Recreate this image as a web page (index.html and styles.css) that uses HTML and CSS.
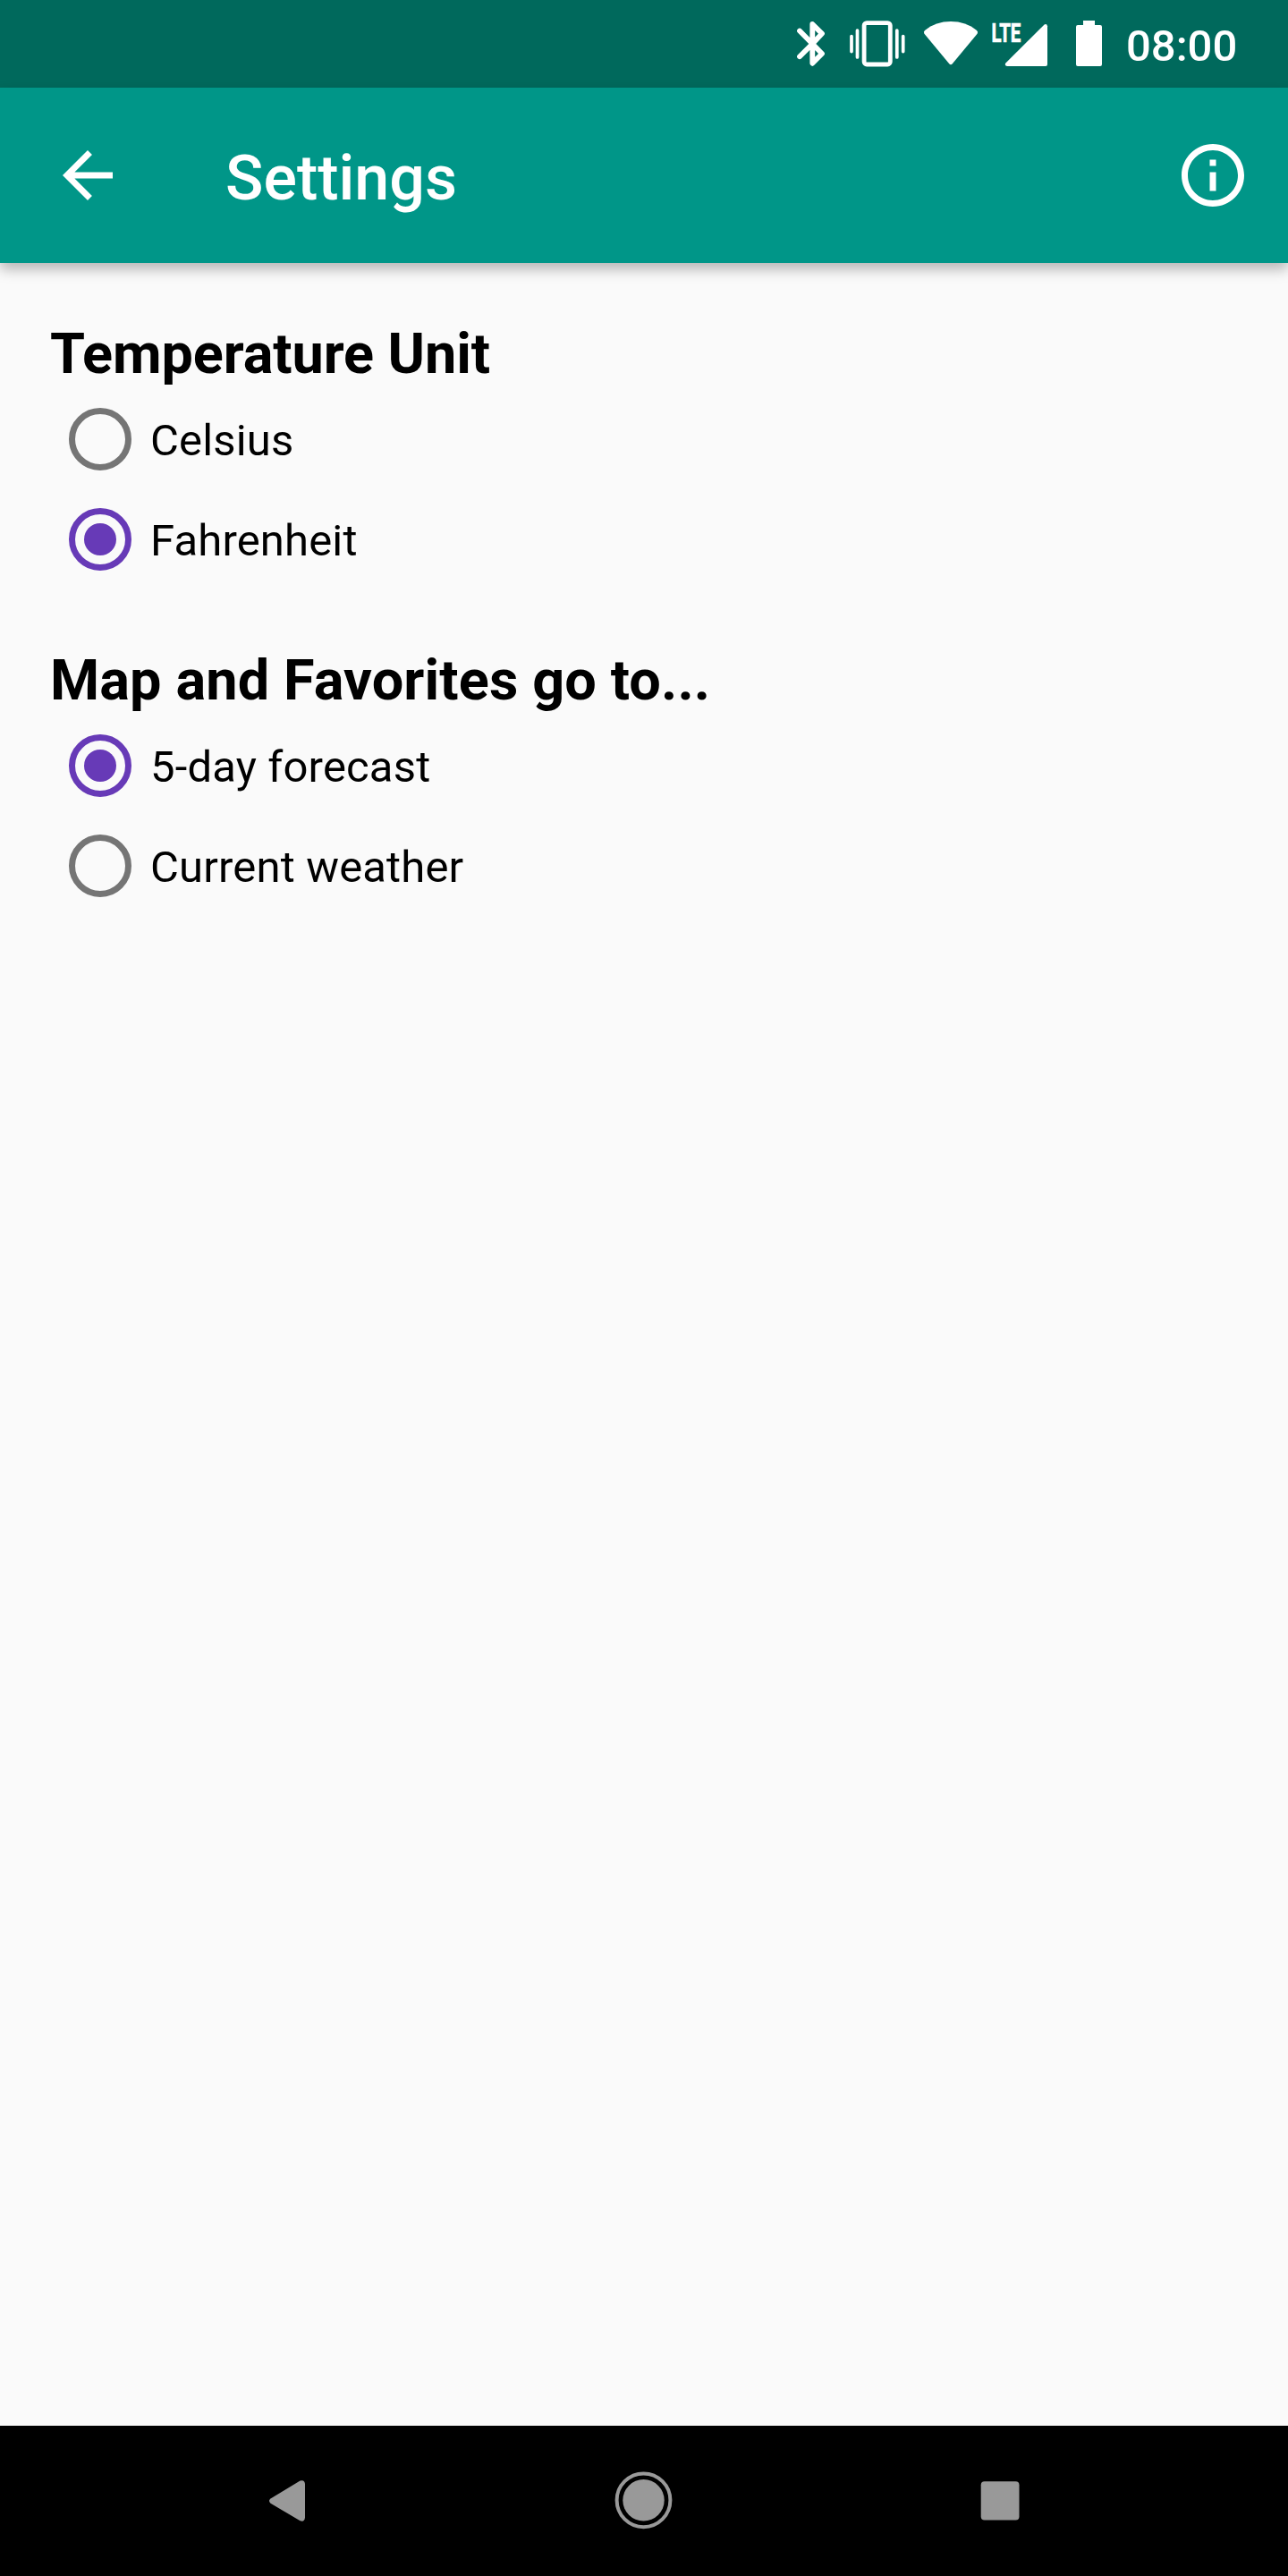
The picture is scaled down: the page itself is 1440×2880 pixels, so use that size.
FILE: index.html
```html
<!DOCTYPE html>
<html lang="en">
<head>
<meta charset="utf-8">
<title>Settings</title>
<link rel="stylesheet" href="styles.css">
</head>
<body>
<div class="screen">
  <div class="status-bar">
    <svg width="60" height="98" viewBox="0 0 60 98" aria-label="Bluetooth">
      <path class="line" stroke-width="5.8" d="M14 34.5 28.3 49 39 60 28.3 70.8V27L39 37.6 28.3 49 14 63.2"/>
    </svg>
    <svg width="84" height="98" viewBox="0 0 84 98" aria-label="Vibrate">
      <rect class="line" stroke-width="4.8" x="26.1" y="25.6" width="29.2" height="46.4" rx="3"/>
      <path class="line" stroke-width="3.7" d="M12 40.6v17M18.5 34v30M62.8 34v30M69.7 40.6v17"/>
    </svg>
    <svg width="78" height="98" viewBox="0 0 78 98" aria-label="Wi-Fi">
      <path class="solid" d="M10 34C18 27.300 28 24 39 24S60 27.300 68 34Q70 35.700 68.600 37.800L41 71Q39 73.400 37 71L9.400 37.800Q8 35.700 10 34Z"/>
    </svg>
    <svg width="82" height="98" viewBox="0 0 82 98" aria-label="Mobile signal">
      <text class="network" x="6.400" y="46.500" textLength="33" lengthAdjust="spacingAndGlyphs">LTE</text>
      <path class="solid" d="M69 29.200V72Q69 74 67 74H24Q20.500 73.300 22.600 70.300L65.300 27.700Q68.300 26 69 29.200Z"/>
    </svg>
    <svg width="66" height="98" viewBox="0 0 66 98" aria-label="Battery">
      <path class="solid" d="M27 23H40V28H46Q48 28 48 30V72Q48 74 46 74H21Q19 74 19 72V30Q19 28 21 28H27Z"/>
    </svg>
    <span class="clock">08:00</span>
  </div>

  <header class="app-bar">
    <svg class="icon" viewBox="0 0 24 24" aria-label="Back"><path d="M20 11H7.830l5.590-5.590L12 4l-8 8 8 8 1.410-1.410L7.830 13H20v-2z"/></svg>
    <h1 class="title">Settings</h1>
    <svg class="icon" viewBox="0 0 24 24" aria-label="About"><path d="M11 17h2v-6h-2v6zm1-15C6.480 2 2 6.480 2 12s4.480 10 10 10 10-4.480 10-10S17.520 2 12 2zm0 18c-4.410 0-8-3.590-8-8s3.590-8 8-8 8 3.590 8 8-3.590 8-8 8zM11 9h2V7h-2v2z"/></svg>
  </header>

  <main class="content">
    <section class="group">
      <h2 class="heading">Temperature Unit</h2>
      <label class="option"><span class="radio"></span><span class="label">Celsius</span></label>
      <label class="option"><span class="radio checked"></span><span class="label">Fahrenheit</span></label>
    </section>
    <section class="group">
      <h2 class="heading wide">Map and Favorites go to...</h2>
      <label class="option"><span class="radio checked"></span><span class="label">5-day forecast</span></label>
      <label class="option"><span class="radio"></span><span class="label">Current weather</span></label>
    </section>
  </main>

  <nav class="nav-bar">
    <svg width="400" height="168" viewBox="0 0 400 168" aria-label="Back">
      <path d="M182.500 81.500 215.500 61.600Q220.500 60 221 65V102.500Q220.500 108 215.500 106.200L182.500 86.700Q179.500 84 182.500 81.500Z"/>
    </svg>
    <svg width="400" height="168" viewBox="0 0 400 168" aria-label="Home">
      <circle cx="199.500" cy="83.300" r="23.200"/>
      <circle class="ring" cx="199.500" cy="83.300" r="29.900"/>
    </svg>
    <svg width="400" height="168" viewBox="0 0 400 168" aria-label="Recents">
      <rect x="176.700" y="62.300" width="42.800" height="43.200" rx="4"/>
    </svg>
  </nav>
</div>
</body>
</html>
```
FILE: styles.css
```css
* {
  box-sizing: border-box;
}

body {
  margin: 0;
  font-family: Roboto, sans-serif;
}

.screen {
  display: flex;
  flex-direction: column;
  width: 1440px;
  height: 2880px;
  background: #fafafa;
  color: #000;
}

.status-bar {
  display: flex;
  flex: none;
  align-items: center;
  justify-content: flex-end;
  height: 98px;
  padding-right: 56px;
  background: #00695c;
  color: #fff;
}

.line {
  fill: none;
  stroke: #fff;
  stroke-linecap: round;
  stroke-linejoin: round;
}

.solid {
  fill: #fff;
}

.network {
  fill: #fff;
  stroke: #fff;
  stroke-width: 0.7px;
  font-size: 30px;
  font-weight: 700;
}

.clock {
  width: 134px;
  padding: 5px 0 0 9px;
  font-size: 49px;
  font-weight: 500;
  line-height: 58px;
}

.app-bar {
  display: flex;
  flex: none;
  align-items: center;
  height: 196px;
  padding: 0 42px 0 56px;
  background: #009688;
  color: #fff;
  box-shadow: 0 7px 14px rgba(0, 0, 0, 0.28);
}

.icon {
  width: 84px;
  height: 84px;
  fill: #fff;
}

.title {
  flex: 1;
  margin: 0 0 0 112px;
  padding-top: 6px;
  font-size: 70px;
  font-weight: 500;
  line-height: 82px;
}

.content {
  display: flex;
  flex: 1;
  flex-direction: column;
  gap: 61px;
  padding: 61px 56px;
}

.heading {
  height: 80px;
  margin: 0;
  font-size: 63px;
  font-weight: 700;
  letter-spacing: -0.1px;
  line-height: 82px;
}

.heading.wide {
  letter-spacing: 0.12px;
}

.option {
  display: flex;
  align-items: center;
  height: 112px;
}

.label {
  padding-top: 4px;
  font-size: 49px;
  letter-spacing: 0.16px;
  line-height: 58px;
}

.radio {
  display: grid;
  place-items: center;
  width: 70px;
  height: 70px;
  margin: 0 21px;
  border: 7px solid #757575;
  border-radius: 50%;
}

.radio.checked {
  border-color: #673ab7;
}

.radio.checked::before {
  content: "";
  width: 36px;
  height: 36px;
  border-radius: 50%;
  background: #673ab7;
}

.nav-bar {
  display: flex;
  flex: none;
  justify-content: center;
  height: 168px;
  background: #000;
  fill: #999;
}

.ring {
  fill: none;
  stroke: #999;
  stroke-width: 4;
}
```
